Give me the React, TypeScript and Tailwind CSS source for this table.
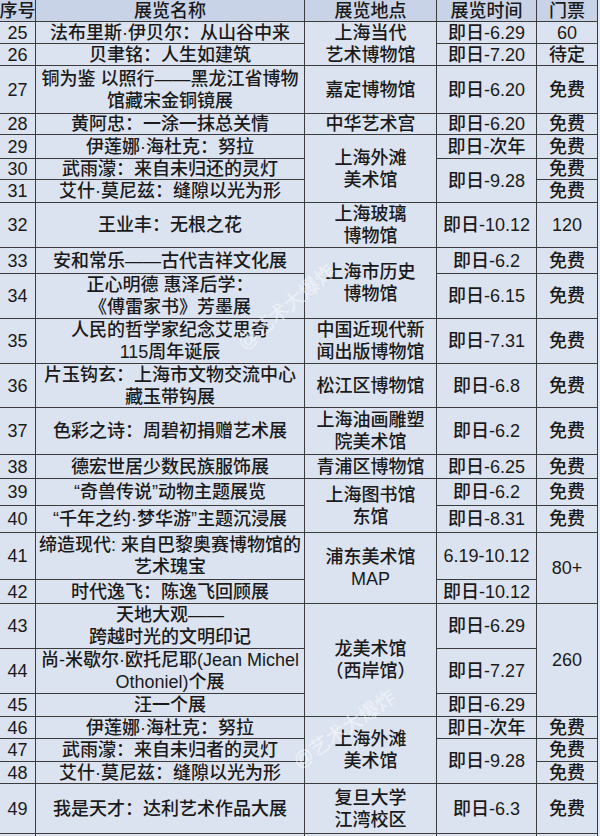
import type { ReactNode } from "react";

type Span = 1 | 2 | 3;
interface CellDef {
  readonly t: string;
  readonly span?: Span;
}
interface Row {
  readonly n: string;
  readonly name: string;
  readonly place?: CellDef;
  readonly time?: CellDef;
  readonly ticket?: CellDef;
}

const ROWS: readonly Row[] = [
  { n: "25", name: "法布里斯·伊贝尔：从山谷中来", place: { t: "上海当代\n艺术博物馆", span: 2 }, time: { t: "即日-6.29" }, ticket: { t: "60" } },
  { n: "26", name: "贝聿铭：人生如建筑", time: { t: "即日-7.20" }, ticket: { t: "待定" } },
  { n: "27", name: "铜为鉴 以照行——黑龙江省博物\n馆藏宋金铜镜展", place: { t: "嘉定博物馆" }, time: { t: "即日-6.20" }, ticket: { t: "免费" } },
  { n: "28", name: "黄阿忠：一涂一抹总关情", place: { t: "中华艺术宫" }, time: { t: "即日-6.20" }, ticket: { t: "免费" } },
  { n: "29", name: "伊莲娜·海杜克：努拉", place: { t: "上海外滩\n美术馆", span: 3 }, time: { t: "即日-次年" }, ticket: { t: "免费" } },
  { n: "30", name: "武雨濛：来自未归还的灵灯", time: { t: "即日-9.28", span: 2 }, ticket: { t: "免费" } },
  { n: "31", name: "艾什·莫尼兹：缝隙以光为形", ticket: { t: "免费" } },
  { n: "32", name: "王业丰：无根之花", place: { t: "上海玻璃\n博物馆" }, time: { t: "即日-10.12" }, ticket: { t: "120" } },
  { n: "33", name: "安和常乐——古代吉祥文化展", place: { t: "上海市历史\n博物馆", span: 2 }, time: { t: "即日-6.2" }, ticket: { t: "免费" } },
  { n: "34", name: "正心明德 惠泽后学：\n《傅雷家书》芳墨展", time: { t: "即日-6.15" }, ticket: { t: "免费" } },
  { n: "35", name: "人民的哲学家纪念艾思奇\n115周年诞辰", place: { t: "中国近现代新\n闻出版博物馆" }, time: { t: "即日-7.31" }, ticket: { t: "免费" } },
  { n: "36", name: "片玉钩玄：上海市文物交流中心\n藏玉带钩展", place: { t: "松江区博物馆" }, time: { t: "即日-6.8" }, ticket: { t: "免费" } },
  { n: "37", name: "色彩之诗：周碧初捐赠艺术展", place: { t: "上海油画雕塑\n院美术馆" }, time: { t: "即日-6.2" }, ticket: { t: "免费" } },
  { n: "38", name: "德宏世居少数民族服饰展", place: { t: "青浦区博物馆" }, time: { t: "即日-6.25" }, ticket: { t: "免费" } },
  { n: "39", name: "“奇兽传说”动物主题展览", place: { t: "上海图书馆\n东馆", span: 2 }, time: { t: "即日-6.2" }, ticket: { t: "免费" } },
  { n: "40", name: "“千年之约·梦华游”主题沉浸展", time: { t: "即日-8.31" }, ticket: { t: "免费" } },
  { n: "41", name: "缔造现代: 来自巴黎奥赛博物馆的\n艺术瑰宝", place: { t: "浦东美术馆\nMAP", span: 2 }, time: { t: "6.19-10.12" }, ticket: { t: "80+", span: 2 } },
  { n: "42", name: "时代逸飞：陈逸飞回顾展", time: { t: "即日-10.12" } },
  { n: "43", name: "天地大观——\n跨越时光的文明印记", place: { t: "龙美术馆\n（西岸馆）", span: 3 }, time: { t: "即日-6.29" }, ticket: { t: "260", span: 3 } },
  { n: "44", name: "尚-米歇尔·欧托尼耶(Jean Michel\nOthoniel)个展", time: { t: "即日-7.27" } },
  { n: "45", name: "汪一个展", time: { t: "即日-6.29" } },
  { n: "46", name: "伊莲娜·海杜克：努拉", place: { t: "上海外滩\n美术馆", span: 3 }, time: { t: "即日-次年" }, ticket: { t: "免费" } },
  { n: "47", name: "武雨濛：来自未归者的灵灯", time: { t: "即日-9.28", span: 2 }, ticket: { t: "免费" } },
  { n: "48", name: "艾什·莫尼兹：缝隙以光为形", ticket: { t: "免费" } },
  { n: "49", name: "我是天才：达利艺术作品大展", place: { t: "复旦大学\n江湾校区" }, time: { t: "即日-6.3" }, ticket: { t: "免费" } },
];

const SPAN_CLASS: Record<Span, string> = {
  1: "",
  2: "row-span-2",
  3: "row-span-3",
};

function Cell({ children, span = 1, head = false }: { children?: ReactNode; span?: Span; head?: boolean }) {
  return (
    <div
      className={`${SPAN_CLASS[span]} ${head ? "bg-[#c9d3e7]" : "bg-[#dce3f0]"} flex items-center justify-center overflow-hidden whitespace-pre text-center leading-[22px]`}
    >
      {children}
    </div>
  );
}

export default function App() {
  return (
    <div className="relative h-[836px] w-[600px] overflow-hidden bg-[#e4e9f3] font-['Liberation_Sans','Noto_Sans_CJK_SC',sans-serif] text-[18px] font-medium text-[#1a1a1a]">
      <div className="grid w-[598px] grid-cols-[35px_268px_131px_99px_60px] grid-rows-[21px_21px_21px_47px_20px_23px_20px_22px_44px_25px_44px_44px_43px_46px_23px_26px_26px_46px_23px_44px_44px_22px_21px_22px_21px_49px_30px] gap-px bg-[#3c3c3c] pr-px">
        <Cell head>序号</Cell>
        <Cell head>展览名称</Cell>
        <Cell head>展览地点</Cell>
        <Cell head>展览时间</Cell>
        <Cell head>门票</Cell>
        {ROWS.map((r) => (
          <div key={r.n} className="contents">
            <Cell>{r.n}</Cell>
            <Cell>{r.name}</Cell>
            {r.place && <Cell span={r.place.span}>{r.place.t}</Cell>}
            {r.time && <Cell span={r.time.span}>{r.time.t}</Cell>}
            {r.ticket && <Cell span={r.ticket.span}>{r.ticket.t}</Cell>}
          </div>
        ))}
        <Cell />
        <Cell />
        <Cell />
        <Cell />
        <Cell />
      </div>

      {/* faint watermarks over the table */}
      <span className="pointer-events-none absolute left-[226px] top-[292px] -rotate-[40deg] whitespace-nowrap text-[20px] font-normal text-white/50">
        @艺术大爆炸
      </span>
      <span className="pointer-events-none absolute left-[284px] top-[714px] -rotate-[35deg] whitespace-nowrap text-[20px] font-normal text-white/50">
        @艺术大爆炸
      </span>
    </div>
  );
}
